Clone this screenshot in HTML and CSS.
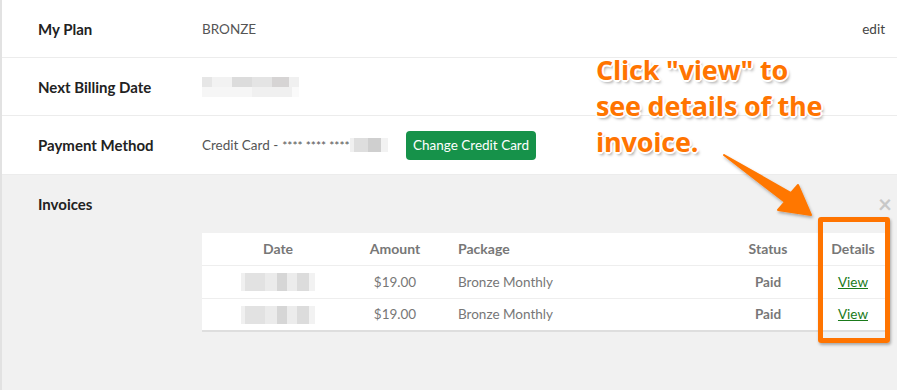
FILE: index.html
```html
<!DOCTYPE html>
<html lang="en">
<head>
    <meta charset="UTF-8">
    <title>Account - My Plan</title>
    <link rel="stylesheet" href="styles.css">
</head>
<body>
<div class="page">

    <div class="row">
        <div class="label">My Plan</div>
        <div class="value">BRONZE</div>
        <a class="edit">edit</a>
    </div>

    <div class="row">
        <div class="label">Next Billing Date</div>
        <div class="value"><span class="blur blur-date"></span></div>
    </div>

    <div class="row">
        <div class="label">Payment Method</div>
        <div class="value card">Credit Card - <span class="stars">**** **** ****</span><span class="blur blur-card"></span></div>
        <button class="btn">Change Credit Card</button>
    </div>

    <div class="invoices">
        <div class="invoices-head">
            <div class="label">Invoices</div>
            <span class="close">&times;</span>
        </div>

        <table class="invoice-table">
            <thead>
                <tr>
                    <th class="c-date">Date</th>
                    <th class="c-amount">Amount</th>
                    <th class="c-package">Package</th>
                    <th class="c-status">Status</th>
                    <th class="c-details">Details</th>
                </tr>
            </thead>
            <tbody>
                <tr>
                    <td class="c-date"><span class="blur blur-inv"></span></td>
                    <td class="c-amount">$19.00</td>
                    <td class="c-package">Bronze Monthly</td>
                    <td class="c-status">Paid</td>
                    <td class="c-details"><a href="#">View</a></td>
                </tr>
                <tr>
                    <td class="c-date"><span class="blur blur-inv"></span></td>
                    <td class="c-amount">$19.00</td>
                    <td class="c-package">Bronze Monthly</td>
                    <td class="c-status">Paid</td>
                    <td class="c-details"><a href="#">View</a></td>
                </tr>
            </tbody>
        </table>
    </div>

    <!-- annotation on top of the screenshot -->
    <div class="note">Click "view" to<br>see details of the<br>invoice.</div>
    <svg class="arrow" width="897" height="390" viewBox="0 0 897 390">
        <defs>
            <filter id="sh" x="-20%" y="-20%" width="140%" height="140%">
                <feDropShadow dx="1" dy="2" stdDeviation="1.5" flood-color="#000" flood-opacity="0.3"/>
            </filter>
        </defs>
        <polygon points="724,155 791,193 798,185 811,215 778,210 785,202" fill="#ff7700" stroke="#ff7700" stroke-width="2" stroke-linejoin="round" filter="url(#sh)"/>
    </svg>
    <div class="highlight"></div>
</div>
</body>
</html>
```

FILE: styles.css
```css
* {
    margin: 0;
    padding: 0;
    box-sizing: border-box;
}

body {
    font-family: 'Lato', 'Liberation Sans', sans-serif;
    background: #fff;
    width: 897px;
    height: 390px;
    overflow: hidden;
}

.page {
    position: relative;
    height: 390px;
    border-left: 2px solid #e2e2e2;
}

.row {
    display: flex;
    align-items: center;
    height: 58px;
    padding-left: 36px;
    padding-right: 12px;
    border-bottom: 1px solid #ececec;
}

.row:nth-child(3) {
    height: 59px;
}

.label {
    width: 164px;
    font-size: 15px;
    font-weight: 700;
    color: #222;
}

.value {
    font-size: 13.5px;
    color: #555;
    display: flex;
    align-items: center;
}

.edit {
    margin-left: auto;
    font-size: 13.5px;
    color: #444;
}

.stars {
    font-size: 12px;
    margin-left: 4px;
    letter-spacing: 0;
}

.card {
    width: 204px;
}

.blur {
    display: inline-block;
}

.blur-date {
    width: 97px;
    height: 20px;
    background:
        linear-gradient(90deg, #e6e6e6 0 10px, #f2f2f2 10px 30px, #dcdcdc 30px 50px, #e4e4e4 50px 70px, #d6d4d4 70px 87px, #f0f0f0 87px) top / 100% 50% no-repeat,
        linear-gradient(90deg, #f6f6f6 0 50px, #f0f0f0 50px 90px, #fafafa 90px) bottom / 100% 50% no-repeat;
}

.blur-card {
    width: 38px;
    height: 14px;
    background: linear-gradient(90deg, #f0f0f0 0 4px, #dedede 4px 18px, #cfcfcf 18px 31px, #f2f2f2 31px);
}

.btn {
    height: 29px;
    padding: 0 7px;
    background-color: #16924a;
    color: white;
    border: none;
    border-radius: 4px;
    font-family: inherit;
    font-size: 13.5px;
    cursor: pointer;
}

.invoices {
    background: #f1f1f1;
    height: 215px;
    padding-top: 18px;
}

.invoices-head {
    display: flex;
    align-items: center;
    justify-content: space-between;
    padding-left: 36px;
    padding-right: 5px;
    height: 22px;
}

.close {
    font-size: 24px;
    font-weight: 700;
    color: #c8c8c8;
    line-height: 1;
}

.invoice-table {
    margin-left: 200px;
    margin-top: 18px;
    width: 688px;
    border-collapse: collapse;
    background: #fff;
    border-bottom: 2px solid #dedede;
    font-size: 13.5px;
    color: #777;
}

.invoice-table th {
    height: 32px;
    font-size: 14px;
    font-weight: 700;
    color: #777;
    border-bottom: 1px solid #eee;
}

.invoice-table td {
    height: 33px;
    border-bottom: 1px solid #eee;
}

.invoice-table tr:last-child td {
    border-bottom: none;
}

.c-date { width: 152px; text-align: center; }
.c-amount { width: 82px; text-align: center; }
.c-package { width: 284px; text-align: left; padding-left: 22px; }
.c-status { width: 96px; text-align: center; }
.c-details { width: 74px; text-align: center; }

td.c-status {
    font-weight: 700;
}

.c-details a {
    color: #1a7a1a;
    text-decoration: underline;
}

.blur-inv {
    width: 74px;
    height: 18px;
    vertical-align: middle;
    background: linear-gradient(90deg, #f0f0f0 0 4px, #e2e2e2 4px 24px, #ebebeb 24px 36px, #d6d6d6 36px 46px, #ececec 46px 56px, #dcdcdc 56px 68px, #f2f2f2 68px);
}

.note {
    position: absolute;
    left: 594px;
    top: 52px;
    font-family: 'Open Sans', sans-serif;
    font-size: 27px;
    font-weight: 700;
    line-height: 36px;
    color: #ff7400;
    letter-spacing: -0.2px;
    text-shadow:
        -1px -1px 0 #fff, 1px -1px 0 #fff, -1px 1px 0 #fff, 1px 1px 0 #fff,
        0 2px 0 #fff, 2px 0 0 #fff, 0 -2px 0 #fff, -2px 0 0 #fff,
        2px 3px 3px rgba(0, 0, 0, 0.35);
}

.arrow {
    position: absolute;
    left: -2px;
    top: 0;
    pointer-events: none;
}

.highlight {
    position: absolute;
    left: 816px;
    top: 217px;
    width: 72px;
    height: 126px;
    border: 5px solid #ff7400;
    border-radius: 3px;
    box-shadow: 1px 2px 3px rgba(0, 0, 0, 0.3);
}
```
